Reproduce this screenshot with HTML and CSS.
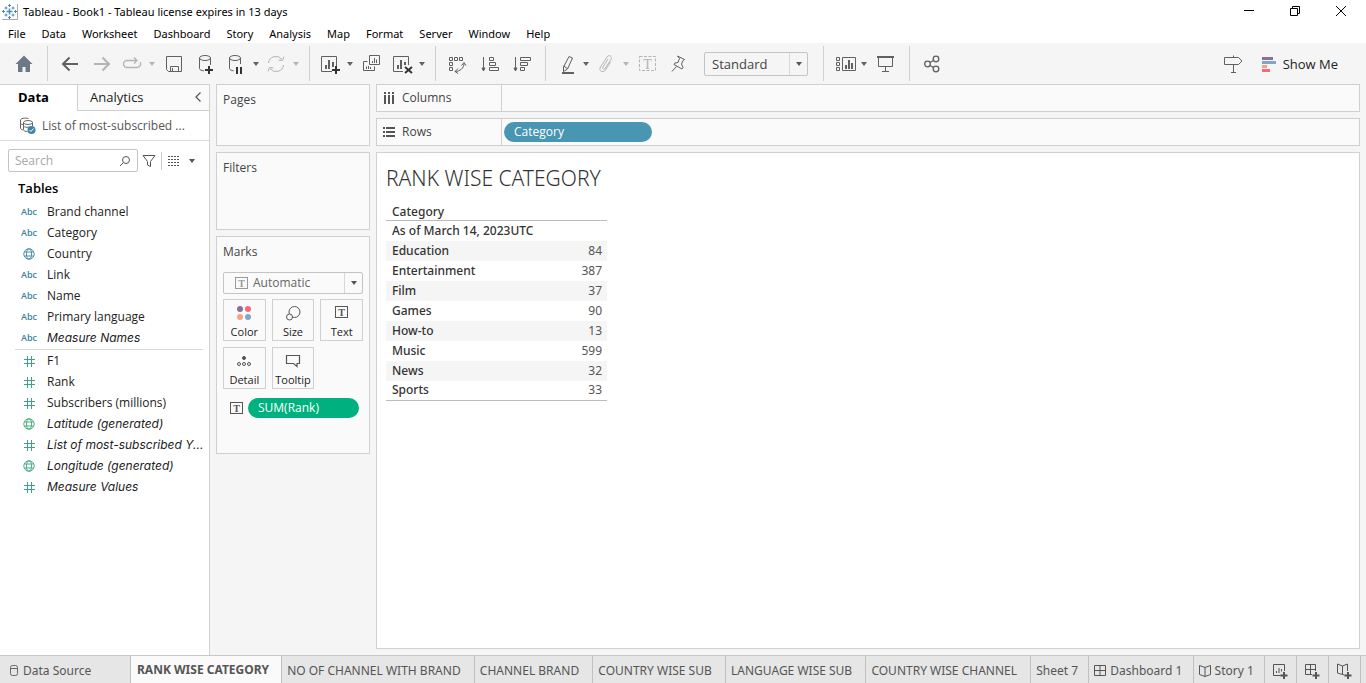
FILE: index.html
```
<!DOCTYPE html>
<html lang="en">
<head>
<meta charset="utf-8">
<title>Tableau - Book1</title>
<link rel="stylesheet" href="styles.css">
</head>
<body>
<svg class="defs" aria-hidden="true">
  <symbol id="caret" viewBox="0 0 8 8"><path d="M1 2h6L4 6z" fill="currentColor"/></symbol>
  <symbol id="hash" viewBox="0 0 14 14"><path d="M5.500 2v11M9.500 2v11M2 5.500h11M2 9.500h11" fill="none" stroke="currentColor"/></symbol>
  <symbol id="globe" viewBox="0 0 14 14"><g fill="none" stroke="currentColor" stroke-width=".9"><circle cx="7" cy="7" r="5.200"/><ellipse cx="7" cy="7" rx="2.500" ry="5.200"/><path d="M2.500 5h9M2.500 9h9"/></g></symbol>
  <symbol id="tbox" viewBox="0 0 14 14"><rect x=".5" y="1.500" width="12" height="11" fill="none" stroke="currentColor"/><text x="6.500" y="10.500" text-anchor="middle" font-family="Liberation Serif, serif" font-weight="bold" font-size="10" fill="currentColor">T</text></symbol>
</svg>

<header class="titlebar">
  <svg class="logo" width="16" height="16" viewBox="0 0 16 16"><path d="M15.500 0v15.500H0" fill="none" stroke="#aaa"/><g stroke="#4a8cb0" fill="none"><path d="M7.500 4.500v6M4.500 7.500h6" stroke-width="1.500"/><path d="M7.500 0v3M6 1.500h3M7.500 12v3M6 13.500h3M0 7.500h3M1.500 6v3M12 7.500h3M13.500 6v3M4 2.500v3M2.500 4h3M11 2.500v3M9.500 4h3M4 9.500v3M2.500 11h3M11 9.500v3M9.500 11h3"/></g></svg>
  <span class="apptitle">Tableau - Book1 - Tableau license expires in 13 days</span>
  <button class="winbtn" aria-label="Minimize"><svg width="12" height="12" viewBox="0 0 12 12"><path d="M1 4.500h10" stroke="#000"/></svg></button>
  <button class="winbtn" aria-label="Restore"><svg width="12" height="12" viewBox="0 0 12 12"><path d="M1.500 2.500h7v7h-7zM3.500 2.500v-2h7v7h-2" fill="none" stroke="#000"/></svg></button>
  <button class="winbtn" aria-label="Close"><svg width="12" height="12" viewBox="0 0 12 12"><path d="M1 0l10 10M11 0L1 10" stroke="#000"/></svg></button>
</header>

<nav class="menubar">
  <a href="#">File</a><a href="#">Data</a><a href="#">Worksheet</a><a href="#">Dashboard</a><a href="#">Story</a><a href="#">Analysis</a><a href="#">Map</a><a href="#">Format</a><a href="#">Server</a><a href="#">Window</a><a href="#">Help</a>
</nav>

<div class="toolbar">
  <div class="group home">
    <button class="tool" aria-label="Home"><svg class="ic" viewBox="0 0 24 24"><path d="M12 3.500L20.500 12H18v8h-4.500v-5h-3v5H6v-8H3.500z" fill="#6d7885" stroke="none"/></svg></button>
  </div>
  <div class="group">
    <button class="tool" aria-label="Undo"><svg class="ic heavy" viewBox="0 0 24 24"><path d="M20 12H5M11.500 5.500L5 12l6.500 6.500"/></svg></button>
    <button class="tool off" aria-label="Redo"><svg class="ic heavy" viewBox="0 0 24 24"><path d="M4 12h15M12.500 5.500L19 12l-6.500 6.500"/></svg></button>
    <button class="tool slim off" aria-label="Replay"><svg class="ic" viewBox="0 0 24 24"><path d="M9 8.500H7a3.500 3.500 0 0 0 0 7h10a3.500 3.500 0 0 0 3-5.500M9 8.500h8M14 5.500l3 3-3 3" stroke-width="1.300"/></svg></button>
    <button class="drop off" aria-label="Replay options"><svg><use href="#caret"/></svg></button>
    <button class="tool" aria-label="Save"><svg class="ic" viewBox="0 0 24 24"><path d="M4.500 4.500h15v15h-13l-2-2zM8.500 19.500v-5h8v5M10.500 16v3.500"/></svg></button>
    <button class="tool" aria-label="New data source"><svg class="ic" viewBox="0 0 24 24"><ellipse cx="11" cy="6" rx="5.500" ry="2.500"/><path d="M5.500 6v10.500c0 1.300 2 2.200 4.500 2.300M16.500 6v7"/><path class="bold" d="M15 14v8M11 18h8"/></svg></button>
    <button class="tool slim" aria-label="Pause auto updates"><svg class="ic" viewBox="0 0 24 24"><ellipse cx="11" cy="6" rx="5.500" ry="2.500"/><path d="M5.500 6v10.500c0 1.300 2 2 4 2.300M16.500 6v6"/><path class="bold" d="M13 15v7M17 15v7"/></svg></button>
    <button class="drop" aria-label="Pause options"><svg><use href="#caret"/></svg></button>
    <button class="tool slim off" aria-label="Refresh"><svg class="ic" viewBox="0 0 24 24"><path d="M4.500 11a7.500 7.500 0 0 1 13.500-3.500M19.500 13A7.500 7.500 0 0 1 6 16.500M20 4.500l-1.500 4-4-.5M4 19.500l1.500-4 4 .5"/></svg></button>
    <button class="drop off" aria-label="Refresh options"><svg><use href="#caret"/></svg></button>
  </div>
  <div class="group">
    <button class="tool slim" aria-label="New worksheet"><svg class="ic" viewBox="0 0 24 24"><path d="M14 19.500H3.500v-15h15V14"/><path class="mid" d="M8 17v-4M11 17V8M15 15v-5"/><path class="bold" d="M18 14v8M14 18h8"/></svg></button>
    <button class="drop" aria-label="New worksheet options"><svg><use href="#caret"/></svg></button>
    <button class="tool" aria-label="Duplicate"><svg class="ic" viewBox="0 0 24 24"><path d="M9.500 3.500h10v9h-10zM7.500 9.500h-4v9h11v-4M12.500 11V9M14.500 11V6M16.500 11V7.500M6.500 17v-2.500M8.500 17v-3M10.500 17v-2"/></svg></button>
    <button class="tool slim" aria-label="Clear sheet"><svg class="ic" viewBox="0 0 24 24"><path d="M13 19.500H3.500v-15h15V13"/><path class="mid" d="M8 17v-4M11 17V8M15 13v-3"/><path class="bold" d="M15 15l7 6M22 15l-7 6"/></svg></button>
    <button class="drop" aria-label="Clear options"><svg><use href="#caret"/></svg></button>
  </div>
  <div class="group">
    <button class="tool" aria-label="Swap rows and columns"><svg class="ic" viewBox="0 0 24 24"><path d="M3.500 5.500h3v3h-3zM8.500 5.500h3v3h-3zM13.500 5.500h3v3h-3zM3.500 10.500h3v3h-3zM3.500 15.500h3v3h-3zM9 19.500c5 0 9-3.500 9-8M15.500 13.500l2.500-3 2 3M12 16.500l-3 3 3 2"/></svg></button>
    <button class="tool" aria-label="Sort ascending"><svg class="ic" viewBox="0 0 24 24"><path d="M5.500 5v14M11.500 5.500h4v3h-4zM11.500 10.500h6v3h-6zM11.500 15.500h9v3h-9z"/><path d="M4 16h3l-1.500 3z" fill="currentColor"/></svg></button>
    <button class="tool" aria-label="Sort descending"><svg class="ic" viewBox="0 0 24 24"><path d="M5.500 5v14M10.500 5.500h10v3h-10zM10.500 10.500h7v3h-7zM10.500 15.500h4v3h-4z"/><path d="M4 16h3l-1.500 3z" fill="currentColor"/></svg></button>
  </div>
  <div class="group">
    <button class="tool slim" aria-label="Highlight"><svg class="ic" viewBox="0 0 24 24"><path d="M15 4.500l3.500 1.500-5 11-4 2.500v-4.500zM9.500 14l4 2.500"/><path class="mid" d="M8 21h12"/></svg></button>
    <button class="drop" aria-label="Highlight options"><svg><use href="#caret"/></svg></button>
    <button class="tool slim off" aria-label="Group members"><svg class="ic" viewBox="0 0 24 24"><path d="M14 7l-5 8c-1 2 1 3 2.200 1.300L17 7.500c1.800-3-2-5.500-4-2.500L6.500 15c-2.500 4 3 6.500 5 3l5-8"/></svg></button>
    <button class="drop off" aria-label="Group options"><svg><use href="#caret"/></svg></button>
    <button class="tool off" aria-label="Show mark labels"><svg class="ic" viewBox="0 0 24 24"><rect x="3.500" y="4.500" width="16" height="14" stroke-dasharray="3 1.500"/><text x="11.500" y="16.500" text-anchor="middle" class="tee">T</text></svg></button>
    <button class="tool" aria-label="Fix axes"><svg class="ic" viewBox="0 0 24 24"><path d="M9.500 4l7 3.500-1.500 1-1.500 3.500 1.500 3.500-1 1.500-8-4.500 1-1.500 3-.500 1.500-4zM8.500 14.500L4 19.500"/></svg></button>
    <label class="combo fit"><select aria-label="Fit"><option>Standard</option></select><span class="arrow"><svg><use href="#caret"/></svg></span></label>
  </div>
  <div class="group">
    <button class="tool slim" aria-label="Show or hide cards"><svg class="ic" viewBox="0 0 24 24"><path d="M4.500 5.500h3v3h-3zM4.500 10.500h3v3h-3zM4.500 15.500h3v3h-3zM10.500 5.500h13v13h-13z"/><path class="mid" d="M14 17v-4M17 17V8M20 17v-6"/></svg></button>
    <button class="drop" aria-label="Card options"><svg><use href="#caret"/></svg></button>
    <button class="tool" aria-label="Presentation mode"><svg class="ic" viewBox="0 0 24 24"><path d="M4.500 5.500v9h14v-9M11.500 14.500v5M8 19.500h7"/><path class="mid" d="M3 5h17"/></svg></button>
  </div>
  <div class="group last">
    <button class="tool" aria-label="Share"><svg class="ic" viewBox="0 0 24 24" stroke-width="1.300"><circle cx="7.500" cy="12" r="2.800"/><circle cx="16" cy="7" r="2.800"/><circle cx="16" cy="17" r="2.800"/><path d="M10 10.500l3.500-2M10 13.500l3.500 2"/></svg></button>
  </div>
  <button class="tool" aria-label="Guide"><svg class="ic" viewBox="0 0 24 24"><path d="M3.500 5.500h14l3.500 3.500-3.500 3.500h-14zM12.500 3.500v2M12.500 12.500v8M10 20.500h5"/></svg></button>
  <button class="showme"><svg width="16" height="16" viewBox="0 0 16 16"><path d="M1 1h11v3H1z" fill="#8a7099"/><path d="M1 5h14v3H1z" fill="#7fa5cf"/><path d="M1 9h5v3H1z" fill="#f4a57b"/><path d="M1 13h8v3H1z" fill="#f9697b"/></svg>Show Me</button>
</div>

<main class="work">
  <aside class="side">
    <div class="sidetabs">
      <button class="sidetab current">Data</button>
      <button class="sidetab">Analytics</button>
      <button class="collapse" aria-label="Collapse"><svg width="8" height="12" viewBox="0 0 8 12"><path d="M6.500 1.500L2 6l4.500 4.500" fill="none" stroke="#555" stroke-width="1.200"/></svg></button>
    </div>
    <a class="source" href="#"><svg width="18" height="18" viewBox="0 0 18 18"><g fill="none" stroke="#666"><path d="M9.500 1.500c-4-1-8 0-8 1.500v8c0 1 1 1.500 2.500 2M1.500 6c0 1 1 1.300 2.500 1.500"/><ellipse cx="9" cy="5.500" rx="4.500" ry="2"/><path d="M4.500 5.500v7c0 1.500 2 2 4 2.200M13.500 5.500V9M4.500 9c1 1.500 4 1.500 6 1"/></g><circle cx="12.500" cy="13" r="4" fill="#3b84a8"/><path d="M10.500 13l1.500 1.500 2.500-3" fill="none" stroke="#fff"/></svg><span>List of most-subscribed ...</span></a>
    <div class="searchrow">
      <label class="search"><input type="text" placeholder="Search" aria-label="Search"><svg width="12" height="12" viewBox="0 0 12 12"><circle cx="7" cy="5" r="3.500" fill="none" stroke="#555"/><path d="M4.500 7.500L1 11" stroke="#555"/></svg></label>
      <button class="plain" aria-label="Filter"><svg width="14" height="14" viewBox="0 0 14 14"><path d="M1 1.500h12L8.500 7.500v5l-3-1.500V7.500z" fill="none" stroke="#555"/></svg></button>
      <button class="plain listview" aria-label="View"><svg width="12" height="12" viewBox="0 0 12 12"><path d="M0 1.500h12M0 4.500h12M0 7.500h12M0 10.500h12" stroke="#555" stroke-dasharray="2 1"/></svg><svg class="tri"><use href="#caret"/></svg></button>
    </div>
    <h2 class="tables">Tables</h2>
    <ul class="fields dims">
      <li><b class="abc">Abc</b>Brand channel</li>
      <li><b class="abc">Abc</b>Category</li>
      <li><svg class="kind"><use href="#globe"/></svg>Country</li>
      <li><b class="abc">Abc</b>Link</li>
      <li><b class="abc">Abc</b>Name</li>
      <li><b class="abc">Abc</b>Primary language</li>
      <li><b class="abc">Abc</b><span class="gen">Measure Names</span></li>
    </ul>
    <ul class="fields meas">
      <li><svg class="kind"><use href="#hash"/></svg>F1</li>
      <li><svg class="kind"><use href="#hash"/></svg>Rank</li>
      <li><svg class="kind"><use href="#hash"/></svg>Subscribers (millions)</li>
      <li><svg class="kind"><use href="#globe"/></svg><span class="gen">Latitude (generated)</span></li>
      <li><svg class="kind"><use href="#hash"/></svg><span class="gen">List of most-subscribed Y...</span></li>
      <li><svg class="kind"><use href="#globe"/></svg><span class="gen">Longitude (generated)</span></li>
      <li><svg class="kind"><use href="#hash"/></svg><span class="gen">Measure Values</span></li>
    </ul>
  </aside>

  <div class="cards">
    <section class="card pages"><h3>Pages</h3></section>
    <section class="card filters"><h3>Filters</h3></section>
    <section class="card marks">
      <h3>Marks</h3>
      <label class="combo mark"><svg class="t"><use href="#tbox"/></svg><select aria-label="Mark type"><option>Automatic</option></select><span class="arrow"><svg><use href="#caret"/></svg></span></label>
      <div class="markgrid">
        <button><svg width="16" height="16" viewBox="0 0 16 16"><circle cx="4" cy="4" r="3" fill="#8a7099"/><circle cx="12" cy="4" r="3" fill="#f9697b"/><circle cx="4" cy="12" r="3" fill="#f4a57b"/><circle cx="12" cy="12" r="3" fill="#7fa5cf"/></svg>Color</button>
        <button><svg width="16" height="16" viewBox="0 0 16 16" fill="none" stroke="#555"><circle cx="9.500" cy="7" r="5.500"/><circle cx="4.500" cy="12" r="3" fill="#fafafa"/></svg>Size</button>
        <button><svg class="t"><use href="#tbox"/></svg>Text</button>
        <button><svg width="16" height="16" viewBox="0 0 16 16" fill="none" stroke="#555"><circle cx="8" cy="5" r="1.500" fill="#555"/><circle cx="3" cy="11" r="1.500"/><circle cx="8" cy="11" r="1.500"/><circle cx="13" cy="11" r="1.500"/></svg>Detail</button>
        <button><svg width="16" height="16" viewBox="0 0 16 16" fill="none" stroke="#555" stroke-width="1.200"><path d="M1.500 2.500h13v8H12v3L8.500 10.500h-7z"/></svg>Tooltip</button>
      </div>
      <div class="markpill"><svg class="t"><use href="#tbox"/></svg><button class="pill green">SUM(Rank)</button></div>
    </section>
  </div>

  <div class="canvas">
    <div class="shelf"><div class="shelfname"><svg width="12" height="12" viewBox="0 0 12 12"><path d="M2 0v2M6 0v2M10 0v2M2 3v9M6 3v9M10 3v9" stroke="#555" stroke-width="2"/></svg>Columns</div></div>
    <div class="shelf"><div class="shelfname"><svg width="12" height="12" viewBox="0 0 12 12"><path d="M0 2h2M0 6h2M0 10h2M3 2h9M3 6h9M3 10h9" stroke="#555" stroke-width="2"/></svg>Rows</div><button class="pill blue">Category</button></div>
    <section class="view">
      <h1>RANK WISE CATEGORY</h1>
      <table>
        <thead><tr><th colspan="2" scope="col">Category</th></tr></thead>
        <tbody>
          <tr><th colspan="2" scope="row">As of March 14, 2023UTC</th></tr>
          <tr><th scope="row">Education</th><td>84</td></tr>
          <tr><th scope="row">Entertainment</th><td>387</td></tr>
          <tr><th scope="row">Film</th><td>37</td></tr>
          <tr><th scope="row">Games</th><td>90</td></tr>
          <tr><th scope="row">How-to</th><td>13</td></tr>
          <tr><th scope="row">Music</th><td>599</td></tr>
          <tr><th scope="row">News</th><td>32</td></tr>
          <tr><th scope="row">Sports</th><td>33</td></tr>
        </tbody>
      </table>
    </section>
  </div>
</main>

<footer class="sheets">
  <button class="sheet datasource"><svg width="10" height="14" viewBox="0 0 10 14" fill="none" stroke="#666"><rect x="1.500" y="1.500" width="7" height="10" rx="2"/><path d="M1.500 4.500h7"/></svg>Data Source</button>
  <button class="sheet active">RANK WISE CATEGORY</button>
  <button class="sheet">NO OF CHANNEL WITH BRAND</button>
  <button class="sheet">CHANNEL BRAND</button>
  <button class="sheet">COUNTRY WISE SUB</button>
  <button class="sheet">LANGUAGE WISE SUB</button>
  <button class="sheet">COUNTRY WISE CHANNEL</button>
  <button class="sheet short">Sheet 7</button>
  <button class="sheet short"><svg width="12" height="12" viewBox="0 0 12 12" fill="none" stroke="#555"><path d="M.5 .5h11v10H.5zM6 .5v10M.5 5.500h11"/></svg>Dashboard 1</button>
  <button class="sheet short"><svg width="12" height="12" viewBox="0 0 12 12" fill="none" stroke="#555"><path d="M6 2.500L.5.5v9l5.500 2 5.500-2v-9zM6 2.500v9"/></svg>Story 1</button>
  <button class="sheet add" aria-label="New Worksheet"><svg width="18" height="18" viewBox="0 0 18 18" fill="none" stroke="#555"><path d="M10 13.500H2.500v-11h11V9M5.500 11V9M8 11V6M10.500 9.500V7"/><path d="M13 10v7M9.500 13.500h7" stroke-width="2"/></svg></button>
  <button class="sheet add" aria-label="New Dashboard"><svg width="18" height="18" viewBox="0 0 18 18" fill="none" stroke="#555"><path d="M9 12.500H2.500v-10h10V9M7.500 2.500v10M2.500 7.500h10"/><path d="M13 10v7M9.500 13.500h7" stroke-width="2"/></svg></button>
  <button class="sheet add" aria-label="New Story"><svg width="18" height="18" viewBox="0 0 18 18" fill="none" stroke="#555"><path d="M9.500 13l-2-.5-5-1.500V2l5 2 5-2v7M7.500 4v8.500"/><path d="M13 10v7M9.500 13.500h7" stroke-width="2"/></svg></button>
</footer>
</body>
</html>
```
FILE: styles.css
```
* { box-sizing: border-box; }
body {
  margin: 0;
  height: 100vh;
  display: flex;
  flex-direction: column;
  overflow: hidden;
  background: #f5f5f5;
  color: #222;
  font: 12px/16px "Open Sans", "Noto Sans", sans-serif;
}
button, select, input { font: inherit; color: inherit; background: none; border: 0; padding: 0; margin: 0; }
button { display: flex; align-items: center; white-space: nowrap; }
a { color: inherit; text-decoration: none; }
h1, h2, h3, ul { margin: 0; padding: 0; font-weight: 400; }
svg { display: block; flex: none; }
.defs { display: none; }

.titlebar, .menubar { display: flex; align-items: center; background: #fff; color: #000; font-family: "Noto Sans", sans-serif; font-size: 11px; }
.titlebar { height: 24px; padding-left: 2px; }
.apptitle { flex: 1; padding-left: 5px; }
.winbtn { width: 46px; height: 20px; justify-content: center; }
.winbtn:last-child { margin-right: 2px; }
.menubar { height: 19px; gap: 16px; padding-left: 8px; }

.toolbar { display: flex; align-items: center; height: 41px; padding-right: 28px; color: #606060; }
.group { display: flex; align-items: center; height: 35px; padding: 0 7px 0 6px; border-right: 1px solid #d0d0d0; }
.home { width: 48px; padding: 0 8px; }
.last { border: 0; flex: 1; }
.tool { width: 32px; height: 32px; justify-content: center; }
.slim { width: 28px; }
.drop { width: 12px; height: 32px; justify-content: center; }
.drop svg, .arrow svg, .tri { width: 8px; height: 8px; }
.off { color: #b4b4b4; }
.ic { width: 24px; height: 24px; fill: none; stroke: currentColor; }
.ic .bold { stroke: #333; stroke-width: 2; }
.ic .mid { stroke-width: 2; }
.heavy { stroke-width: 2; }
.tee { font: 14px "Liberation Serif", serif; fill: currentColor; stroke: none; }
.combo { display: flex; align-items: center; border: 1px solid #c4c4c4; border-radius: 2px; }
.combo select { flex: 1; min-width: 0; appearance: none; }
.arrow { display: flex; align-items: center; justify-content: center; align-self: stretch; width: 18px; border-left: 1px solid #d8d8d8; color: #555; }
.fit { width: 104px; height: 24px; margin: 0 8px; padding-left: 7px; font-size: 13px; color: #444; }
.showme { gap: 6px; margin-left: 12px; font-size: 13px; color: #222; }

.work { flex: 1; min-height: 0; display: flex; gap: 6px; padding-right: 6px; }
.side { width: 210px; background: #fff; border-top: 1px solid #d0d0d0; border-right: 1px solid #d0d0d0; }
.sidetabs { display: flex; height: 26px; }
.sidetab { width: 77px; padding: 0 0 2px 18px; font-size: 13px; }
.sidetab + .sidetab { flex: 1; padding-left: 12px; background: #fafafa; border-left: 1px solid #d0d0d0; border-bottom: 1px solid #d0d0d0; }
.current { font-weight: 700; color: #000; }
.collapse { width: 22px; padding: 0 0 2px 7px; background: #fafafa; border-bottom: 1px solid #d0d0d0; }
.source { display: flex; align-items: center; gap: 5px; height: 30px; padding-left: 19px; color: #555; border-bottom: 1px solid #dcdcdc; }
.searchrow { display: flex; align-items: center; gap: 4px; padding: 8px 8px 7px; }
.search { display: flex; align-items: center; width: 130px; height: 23px; padding: 0 6px; border: 1px solid #c4c4c4; border-radius: 2px; }
.search input { flex: 1; min-width: 0; outline: 0; }
.search input::placeholder { color: #a8a8a8; opacity: 1; }
.listview { gap: 6px; height: 18px; padding-left: 6px; margin-left: 1px; border-left: 1px solid #ccc; }
.tri { margin-left: 2px; color: #555; }
.tables { padding: 1px 18px 5px; font-size: 13px; font-weight: 600; color: #000; }
.fields { list-style: none; }
.fields li { display: flex; align-items: center; height: 21px; padding-left: 6px; white-space: nowrap; }
.dims { margin: 0 6px 0 15px; padding-bottom: 1px; border-bottom: 1px solid #d8d8d8; }
.meas { margin-left: 15px; }
.abc { width: 26px; font-size: 9px; font-weight: 600; color: #3b84a0; }
.kind { width: 14px; height: 14px; margin: 0 11px 0 1px; color: #3b84a0; }
.meas .kind { color: #3aa67c; }
.gen { font-family: Inter, sans-serif; font-style: italic; }

.cards { width: 154px; display: flex; flex-direction: column; gap: 6px; }
.card { padding: 7px 6px; background: #fafafa; border: 1px solid #d0d0d0; }
.card h3 { font-size: 12px; color: #444; }
.pages { height: 62px; }
.filters { height: 78px; }
.marks { height: 218px; }
.mark { height: 22px; margin-top: 12px; padding-left: 11px; color: #666; gap: 4px; }
.t { width: 14px; height: 14px; color: #555; }
.mark .t { color: #999; }
.markgrid { display: grid; grid-template-columns: repeat(3, 1fr); gap: 6px; margin-top: 5px; }
.markgrid button { flex-direction: column; justify-content: space-between; height: 42px; padding: 5px 0 0; font-size: 11px; color: #222; border: 1px solid #d0d0d0; }
.markpill { display: flex; align-items: center; gap: 4px; margin: 9px 4px 0 7px; }
.pill { height: 20px; padding: 0 10px; border-radius: 10px; color: #fff; }
.green { flex: 1; background: #00b180; }
.blue { width: 148px; margin-left: 2px; background: #4996b2; }

.canvas { flex: 1; min-width: 0; display: flex; flex-direction: column; gap: 6px; padding-bottom: 6px; }
.shelf { display: flex; align-items: center; height: 28px; background: #fafafa; border: 1px solid #d0d0d0; }
.shelfname { display: flex; align-items: center; gap: 7px; align-self: stretch; width: 125px; padding-left: 6px; color: #444; border-right: 1px solid #d0d0d0; }
.view { flex: 1; padding: 11px 9px; background: #fff; border: 1px solid #d0d0d0; }
.view h1 { font: 300 21px/28px "Noto Sans", sans-serif; color: #333; }
.view table { width: 221px; margin-top: 12px; border-collapse: collapse; font-family: "Noto Sans", sans-serif; border-bottom: 1px solid #bbb; }
.view th, .view td { height: 20px; padding: 0 5px 0 6px; line-height: 16px; text-align: left; font-weight: 500; color: #333; }
.view thead th { height: 16px; border-bottom: 1px solid #bbb; }
.view td { text-align: right; font-weight: 400; color: #555; }
.view tbody tr:nth-child(even) { background: #f5f5f5; }

.sheets { display: flex; height: 28px; background: #e6e6e6; border-top: 1px solid #c8c8c8; color: #555; padding-right: 5px; font-family: "Noto Sans", sans-serif; }
.sheet { flex: 1 1 auto; gap: 4px; padding: 2px 11px 0 5px; border-right: 1px solid #c0c0c0; }
.datasource { flex: 0 0 131px; padding-left: 9px; }
.active { flex: none; padding: 0 12px 0 6px; background: #fafafa; font-weight: 700; }
.short { padding-right: 8px; }
.add { flex: 0 0 32px; padding: 2px 0 0 6px; }
```
